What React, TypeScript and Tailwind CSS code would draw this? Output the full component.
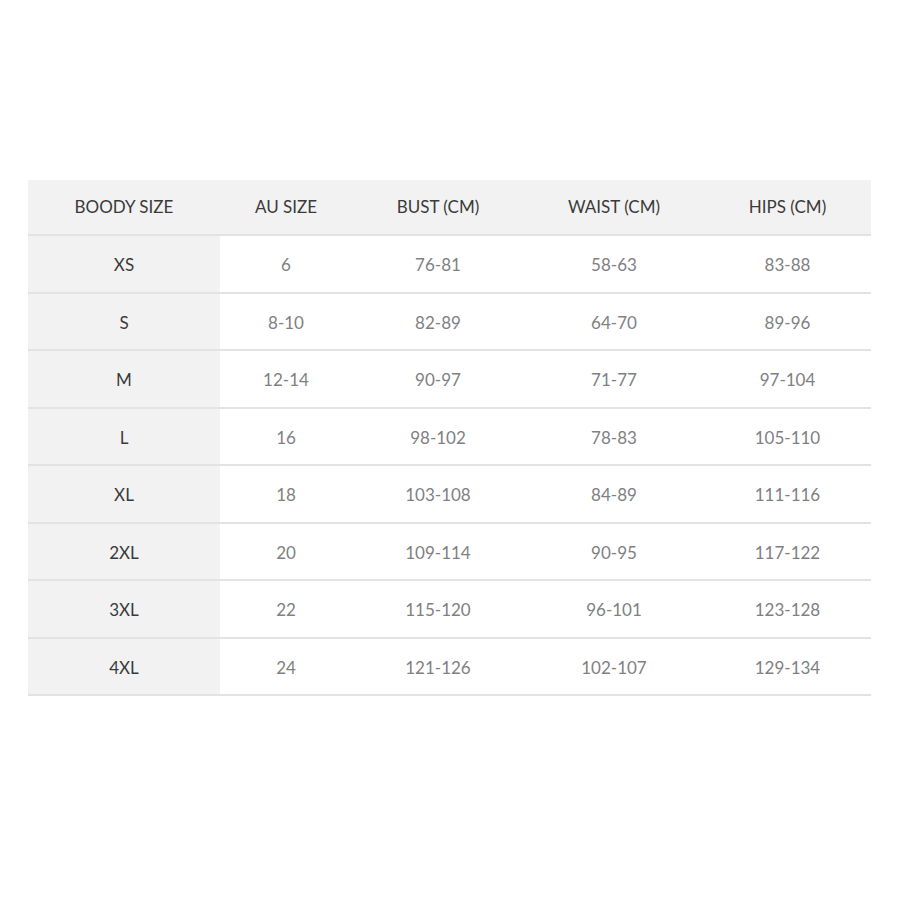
const headers = ["BOODY SIZE", "AU SIZE", "BUST (CM)", "WAIST (CM)", "HIPS (CM)"];

const rows = [
  ["XS", "6", "76-81", "58-63", "83-88"],
  ["S", "8-10", "82-89", "64-70", "89-96"],
  ["M", "12-14", "90-97", "71-77", "97-104"],
  ["L", "16", "98-102", "78-83", "105-110"],
  ["XL", "18", "103-108", "84-89", "111-116"],
  ["2XL", "20", "109-114", "90-95", "117-122"],
  ["3XL", "22", "115-120", "96-101", "123-128"],
  ["4XL", "24", "121-126", "102-107", "129-134"],
];

const cols = "grid grid-cols-[192px_132px_172px_180px_167px]";

export default function App() {
  return (
    <main
      className="w-[900px] h-[900px] bg-white pt-[180px] pl-[28px]"
      style={{ fontFamily: "Lato, 'Open Sans', sans-serif" }}
    >
      <div className="w-[843px]">
        <div className={`${cols} h-[56px] bg-[#f2f2f2] border-b-2 border-[#e3e3e3] text-[17px] text-[#3a3a3a]`}>
          {headers.map((h) => (
            <div key={h} className="flex items-center justify-center">{h}</div>
          ))}
        </div>
        {rows.map((r) => (
          <div key={r[0]} className={`${cols} h-[57.5px] border-b-2 border-[#e3e3e3] text-[17px]`}>
            {r.map((c, i) => (
              <div
                key={i}
                className={
                  i === 0
                    ? "flex items-center justify-center pt-[2px] bg-[#f2f2f2] text-[#3a3a3a]"
                    : "flex items-center justify-center pt-[2px] text-[#7f8083]"
                }
              >
                {c}
              </div>
            ))}
          </div>
        ))}
      </div>
    </main>
  );
}
